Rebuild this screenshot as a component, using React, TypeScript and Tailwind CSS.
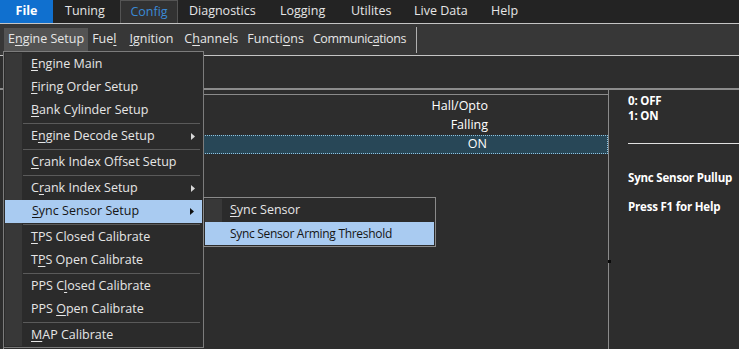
import React from 'react';

// top menu tabs: [label, cell width]
const topTabs: [string, string][] = [
  ['Diagnostics', 'w-[91px]'],
  ['Logging', 'w-[71px]'],
  ['Utilites', 'w-[63px]'],
  ['Live Data', 'w-[77px]'],
  ['Help', 'w-[60px]'],
];

function Key({children}: {children: React.ReactNode}) {
  return <span className="underline underline-offset-2">{children}</span>;
}

type Item = {pre?: string; key?: string; post: string; arrow?: boolean; sep?: boolean; active?: boolean};

const items: Item[] = [
  {key: 'E', post: 'ngine Main'},
  {key: 'F', post: 'iring Order Setup'},
  {key: 'B', post: 'ank Cylinder Setup', sep: true},
  {pre: 'E', key: 'n', post: 'gine Decode Setup', arrow: true, sep: true},
  {key: 'C', post: 'rank Index Offset Setup', sep: true},
  {pre: 'C', key: 'r', post: 'ank Index Setup', arrow: true},
  {key: 'S', post: 'ync Sensor Setup', arrow: true, active: true, sep: true},
  {key: 'T', post: 'PS Closed Calibrate'},
  {pre: 'T', key: 'P', post: 'S Open Calibrate', sep: true},
  {pre: 'PPS C', key: 'l', post: 'osed Calibrate'},
  {pre: 'PPS ', key: 'O', post: 'pen Calibrate', sep: true},
  {key: 'M', post: 'AP Calibrate'},
];

function Arrow({dark}: {dark?: boolean}) {
  return (
    <svg width="4" height="7" viewBox="0 0 4 7" className="absolute right-[8px] top-[8px]">
      <path d="M0 0 L4 3.5 L0 7 Z" fill={dark ? '#111' : '#d8d8d8'} />
    </svg>
  );
}

function MenuRow({it}: {it: Item}) {
  return (
    <>
      <div
        className={
          'relative h-[23px] flex items-center pl-[27px] ' +
          (it.active ? 'bg-[#a9cbf1] text-[#151515] mx-[1px]' : 'text-[#e6e6e6]')
        }
      >
        <span>
          {it.pre}
          {it.key && <Key>{it.key}</Key>}
          {it.post}
        </span>
        {it.arrow && <Arrow dark={it.active} />}
      </div>
      {it.sep && <div className="h-[3px] flex items-center pl-[19px] pr-[3px]"><div className="h-px w-full bg-[#5a5a5a]" /></div>}
    </>
  );
}

export default function App() {
  return (
    <div
      className="relative w-[739px] h-[349px] overflow-hidden bg-[#2d2d2d] text-[12.5px] text-[#e6e6e6]"
      style={{fontFamily: '"Open Sans", "Noto Sans", sans-serif'}}
    >
      {/* top menu */}
      <div className="h-[23px] bg-[#232323] flex items-stretch whitespace-nowrap">
        <div className="w-[53px] bg-[#1070cf] text-white font-bold flex items-center justify-center">File</div>
        <div className="w-[67px] pl-[12px] flex items-center">Tuning</div>
        <div className="w-[58px] bg-[#323232] border border-b-0 border-[#545454] text-[#3a8ad6] flex items-center justify-center">
          Config
        </div>
        {topTabs.map(([t, w]) => (
          <div key={t} className={w + ' pl-[11px] flex items-center'}>{t}</div>
        ))}
      </div>
      <div className="h-px bg-[#c4c4c4]" />
      {/* toolbar menu */}
      <div className="h-[31px] bg-[#373737] flex items-center pl-[4px] whitespace-nowrap">
        <div className="h-[24px] px-[4px] bg-[#535353] flex items-center">
          E<Key>n</Key>gine Setup
        </div>
        <div className="flex items-center gap-[9px] ml-[4px]">
          <span className="mr-[4px]">Fue<Key>l</Key></span>
          <span className="mr-[2px]"><Key>I</Key>gnition</span>
          <span>C<Key>h</Key>annels</span>
          <span>Functi<Key>o</Key>ns</span>
          <span className="tracking-[-0.4px]">Communic<Key>a</Key>tions</span>
        </div>
        <div className="ml-[10px] w-px h-[26px] bg-[#b0b0b0]" />
      </div>
      <div className="h-px bg-[#c4c4c4]" />
      {/* band */}
      <div className="h-[32px] bg-[#2d2d2d]" />
      <div className="h-[2px] bg-[#8c8c8c]" />
      {/* content */}
      <div className="flex h-[261px]">
        <div className="relative w-[609px] pt-[4px] pl-[3px] border-r border-[#8a8a8a]">
          <div className="border-t border-l border-[#8a8a8a] h-full flex flex-col pt-[2px]">
            <div className="h-[19px] flex items-center justify-end pr-[120px] text-white">Hall/Opto</div>
            <div className="h-[19px] flex items-center justify-end pr-[120px] text-white">Falling</div>
            <div className="h-[19px] flex items-center justify-end pr-[120px] text-white bg-[#284757] border border-dotted border-[#8fc3e0]">ON</div>
          </div>
          <div className="absolute right-[-3px] top-[170px] w-[3px] h-[3px] bg-[#0a0a0a]" />
        </div>
        <div className="flex-1 pl-[19px] pt-[3px] font-bold text-[11.5px] tracking-[-0.2px] text-white leading-[15px] whitespace-nowrap">
          <div>0: OFF</div>
          <div>1: ON</div>
          <div className="h-px bg-[#e0e0e0] mt-[20px]" />
          <div className="mt-[26px]">Sync Sensor Pullup</div>
          <div className="mt-[14px]">Press F1 for Help</div>
        </div>
      </div>

      {/* dropdown */}
      <div className="absolute left-[3px] top-[51px] w-[201px] h-[297px] bg-[#2b2b2b] border border-[#7c7c7c] pt-[1px] whitespace-nowrap">
        <div className="absolute left-[1px] top-[1px] bottom-[1px] w-[17px] bg-[#383838]" />
        <div className="relative">
          {items.map((it, i) => (
            <MenuRow key={i} it={it} />
          ))}
        </div>
      </div>

      {/* submenu */}
      <div className="absolute left-[203px] top-[197px] w-[233px] h-[50px] bg-[#2b2b2b] border border-[#8a8a8a] p-[1px] whitespace-nowrap">
        <div className="absolute left-[1px] top-[1px] bottom-[1px] w-[17px] bg-[#383838]" />
        <div className="relative h-[23px] flex items-center pl-[25px]"><span><Key>S</Key>ync Sensor</span></div>
        <div className="relative h-[23px] flex items-center pl-[25px] bg-[#a9cbf1] text-[#151515] text-[12px] tracking-[-0.3px]">Sync Sensor Arming Threshold</div>
      </div>
    </div>
  );
}
